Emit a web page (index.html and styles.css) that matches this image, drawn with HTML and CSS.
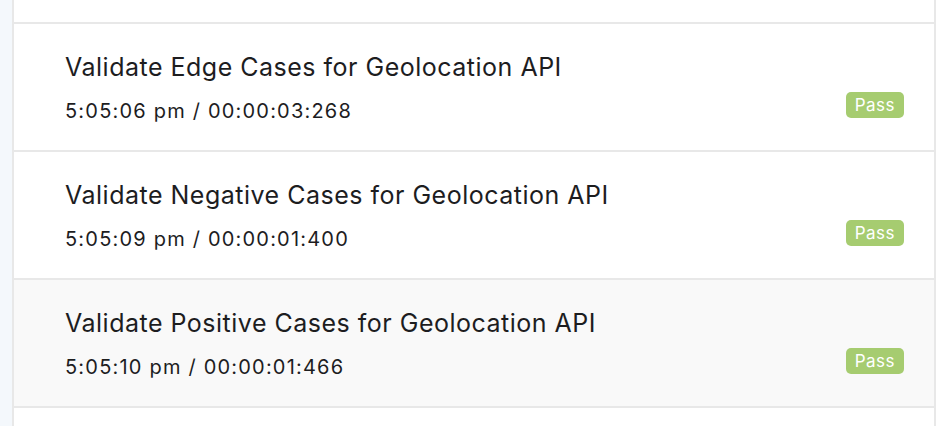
FILE: index.html
```html
<!DOCTYPE html>
<html>
<head>
<meta charset="utf-8">
<link rel="stylesheet" href="styles.css">
</head>
<body>
<div class="page">
  <div class="list">
    <div class="row row-top"></div>
    <div class="row">
      <div class="info">
        <div class="title">Validate Edge Cases for Geolocation API</div>
        <div class="time">5:05:06 pm / 00:00:03:268</div>
      </div>
      <span class="badge">Pass</span>
    </div>
    <div class="row">
      <div class="info">
        <div class="title">Validate Negative Cases for Geolocation API</div>
        <div class="time">5:05:09 pm / 00:00:01:400</div>
      </div>
      <span class="badge">Pass</span>
    </div>
    <div class="row row-hover">
      <div class="info">
        <div class="title">Validate Positive Cases for Geolocation API</div>
        <div class="time">5:05:10 pm / 00:00:01:466</div>
      </div>
      <span class="badge">Pass</span>
    </div>
    <div class="row row-bottom"></div>
  </div>
</div>
</body>
</html>
```
FILE: styles.css
```css
html, body {
  margin: 0;
  padding: 0;
  background: #ffffff;
  font-family: Inter, "Noto Sans", sans-serif;
  color: #1d1d1f;
}
.page {
  display: flex;
  height: 426px;
  overflow: hidden;
  background: linear-gradient(to right, #f4f8fc 0, #f4f8fc 12px, #ffffff 12px);
}
.list {
  margin-left: 12px;
  width: 920px;
  border-left: 2px solid #e8e8e8;
  border-right: 2px solid #e8e8e8;
  background: #ffffff;
  display: flex;
  flex-direction: column;
}
.row {
  display: flex;
  align-items: flex-start;
  justify-content: space-between;
  height: 126px;
  flex-shrink: 0;
  border-bottom: 2px solid #e8e8e8;
  padding: 0 30px 0 51px;
  box-sizing: content-box;
}
.row-top {
  height: 22px;
}
.row-bottom {
  border-bottom: none;
}
.row-hover {
  background: #f9f9f9;
}
.info {
  padding-top: 28px;
}
.title {
  font-size: 25px;
  line-height: 30px;
  letter-spacing: 0.5px;
  white-space: nowrap;
}
.time {
  font-size: 20px;
  line-height: 26px;
  margin-top: 16px;
  letter-spacing: 1.2px;
  white-space: nowrap;
}
.badge {
  margin-top: 68px;
  background: #a6cc70;
  color: #ffffff;
  font-size: 17px;
  line-height: 26px;
  padding: 0 9px;
  letter-spacing: 0.5px;
  border-radius: 5px;
}
```
